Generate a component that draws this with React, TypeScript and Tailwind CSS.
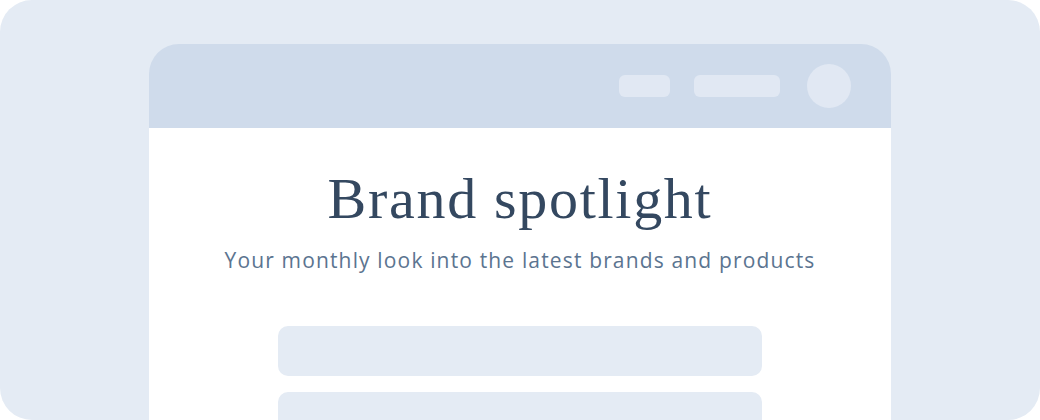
export default function App() {
  return (
    <div className="w-[1040px] h-[420px] overflow-hidden rounded-[32px] bg-[#e4ebf4] flex justify-center pt-[44px]">
      <div className="w-[742px] flex flex-col">
        {/* browser header */}
        <div className="h-[84px] shrink-0 rounded-t-[30px] bg-[#cfdbeb] flex items-center justify-end gap-6 pr-10">
          <div className="w-[51px] h-[22px] rounded-md bg-[#e1e8f3]" />
          <div className="w-[86px] h-[22px] rounded-md bg-[#e1e8f3] mr-[3px]" />
          <div className="w-[44px] h-[44px] rounded-full bg-[#e1e8f3]" />
        </div>

        {/* page body */}
        <div className="flex-1 bg-white flex flex-col items-center pt-[36px]">
          <h1 className="font-['Liberation_Serif',serif] text-[58px] leading-[70px] tracking-[1.7px] text-[#344860]">
            Brand spotlight
          </h1>
          <p className="mt-[12px] font-['Open_Sans',sans-serif] text-[21px] leading-7 tracking-[1.15px] text-[#5b7490]">
            Your monthly look into the latest brands and products
          </p>
          <div className="mt-[52px] w-[484px] flex flex-col gap-4">
            <div className="h-[50px] rounded-[10px] bg-[#e4ebf4]" />
            <div className="h-[50px] rounded-[10px] bg-[#e4ebf4]" />
          </div>
        </div>
      </div>
    </div>
  );
}
